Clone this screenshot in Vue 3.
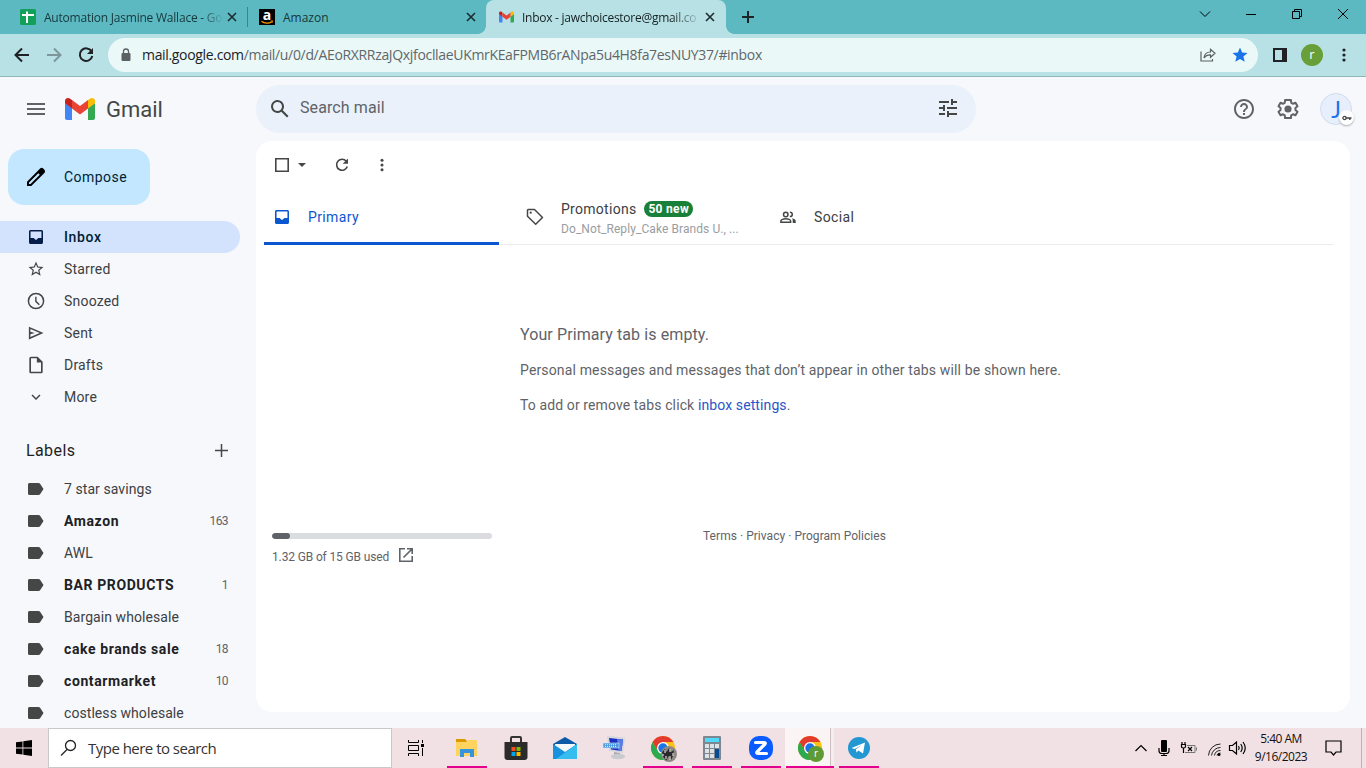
<script setup>
const icons = {
  inbox: 'M19 3H5c-1.100 0-2 .9-2 2v14c0 1.100.9 2 2 2h14c1.100 0 2-.9 2-2V5c0-1.100-.9-2-2-2zM5 5h14v8.200h-3.800c-.6 0-.9.4-1.200 1-.4.700-1.100 1.200-2 1.200s-1.600-.5-2-1.200c-.3-.6-.6-1-1.200-1H5z',
  star: 'M22 9.24l-7.19-.62L12 2 9.19 8.63 2 9.24l5.46 4.73L5.82 21 12 17.27 18.18 21l-1.63-7.03L22 9.24zM12 15.4l-3.76 2.27 1-4.28-3.32-2.88 4.38-.38L12 6.1l1.71 4.04 4.38.38-3.32 2.88 1 4.28L12 15.4z',
  clock: 'M12 2a10 10 0 1 0 0 20 10 10 0 0 0 0-20zm0 18.2a8.2 8.2 0 1 1 0-16.4 8.2 8.2 0 0 1 0 16.4zM12.7 7H11v5.8l4.4 4.4 1.2-1.2-3.9-3.9z',
  sent: 'M2.500 3.500v17L22 12 2.500 3.500zm2 3.100L17 12 4.500 17.400V13.600L10.500 12 4.500 10.400z',
  draft: 'M14 2H6c-1.1 0-2 .9-2 2v16c0 1.1.9 2 2 2h12c1.1 0 2-.9 2-2V8l-6-6zM6 20V4h7v5h5v11H6z',
  more: 'M16.6 8.6L12 13.2 7.4 8.6 6 10l6 6 6-6z',
}
const folders = [
  { name: 'Inbox', icon: 'inbox', active: true },
  { name: 'Starred', icon: 'star' },
  { name: 'Snoozed', icon: 'clock' },
  { name: 'Sent', icon: 'sent' },
  { name: 'Drafts', icon: 'draft' },
  { name: 'More', icon: 'more' },
]
const labels = [
  { name: '7 star savings' },
  { name: 'Amazon', count: 163 },
  { name: 'AWL' },
  { name: 'BAR PRODUCTS', count: 1 },
  { name: 'Bargain wholesale' },
  { name: 'cake brands sale', count: 18 },
  { name: 'contarmarket', count: 10 },
  { name: 'costless wholesale' },
]
const tasks = [
  { id: 'explorer', open: true },
  { id: 'store' },
  { id: 'mail' },
  { id: 'remote' },
  { id: 'chrome', open: true },
  { id: 'calc', open: true },
  { id: 'zoom', open: true },
  { id: 'chrome2', open: true, active: true },
  { id: 'telegram', open: true },
]
const used = 1.2
const total = 15
</script>

<template>
  <div class="screen">
    <header class="tabstrip">
      <div class="tab first">
        <svg width="16" height="16" viewBox="0 0 16 16"><rect width="16" height="16" rx="1.5" fill="#13a05b" /><path d="M2 6h12M7 2.5V14" stroke="#fff" stroke-width="2" /></svg>
        <span class="title sheet">Automation Jasmine Wallace - Go</span>
        <svg class="x" width="10" height="10" viewBox="0 0 10 10"><path d="M1 1l8 8M9 1L1 9" /></svg>
      </div>
      <i class="sep"></i>
      <div class="tab second">
        <svg width="16" height="16" viewBox="0 0 16 16"><rect width="16" height="16" fill="#000" /><text x="8" y="11" text-anchor="middle" class="amazon-a">a</text><path d="M2.5 12.2c3 2.6 7.500 2.600 10.500.5" stroke="#f90" stroke-width="1.200" fill="none" /><path d="M11.500 12l2.200-.2-.7 2" fill="none" stroke="#f90" stroke-width=".8" /></svg>
        <span class="title">Amazon</span>
        <svg class="x" width="10" height="10" viewBox="0 0 10 10"><path d="M1 1l8 8M9 1L1 9" /></svg>
      </div>
      <div class="tab current">
        <svg width="15" height="12" viewBox="0 0 30 22"><path fill="#4285f4" d="M0 5v15a2 2 0 0 0 2 2h5V10z" /><path fill="#34a853" d="M23 10v12h5a2 2 0 0 0 2-2V5z" /><path fill="#fbbc04" d="M23 2v8.500l7-5.200V3c0-2.800-3-4-5.200-2.300z" /><path fill="#c5221f" d="M0 3v2.300l7 5.200V2L5.200.7C3-1 0 .2 0 3z" /><path fill="#ea4335" d="M7 10.500V2l8 6 8-6v8.500l-8 6z" /></svg>
        <span class="title inboxt">Inbox - jawchoicestore@gmail.co</span>
        <svg class="x" width="10" height="10" viewBox="0 0 10 10"><path d="M1 1l8 8M9 1L1 9" /></svg>
      </div>
      <svg class="plus" width="12" height="12" viewBox="0 0 12 12"><path d="M6 0v12M0 6h12" stroke="#1c2426" stroke-width="2" /></svg>
      <div class="winbtns">
        <svg viewBox="0 0 12 12" width="12" height="12"><path d="M1 3.500l5 5 5-5" /></svg>
        <svg viewBox="0 0 12 12" width="12" height="12"><path d="M1 6.500h10" /></svg>
        <svg viewBox="0 0 12 12" width="12" height="12"><path d="M1.500 3.500h7v7h-7zM3.500 3.500v-2h7v7h-2" /></svg>
        <svg viewBox="0 0 12 12" width="12" height="12"><path d="M1 1l10 10M11 1L1 11" /></svg>
      </div>
    </header>

    <div class="toolbar">
      <svg class="nav" viewBox="0 0 16 16" width="16" height="16"><path d="M15 8H2M8 1.500L1.500 8 8 14.500" /></svg>
      <svg class="nav dim" viewBox="0 0 16 16" width="16" height="16"><path d="M1 8h13M8 1.500L14.500 8 8 14.500" /></svg>
      <svg class="nav" viewBox="0 0 16 16" width="16" height="16"><path d="M13.600 4.500A6.300 6.300 0 1 0 14.300 9" /><path d="M15 1v6H9z" class="solid" /></svg>
      <div class="omnibox">
        <svg width="10" height="14" viewBox="0 0 10 14"><rect x=".5" y="5" width="9" height="8" rx="1" fill="#5a6163" /><path d="M2.500 5.500V3.500a2.500 2.500 0 0 1 5 0v2" fill="none" stroke="#5a6163" stroke-width="1.300" /></svg>
        <span class="url"><b>mail.google.com</b>/mail/u/0/d/AEoRXRRzaJQxjfocllaeUKmrKEaFPMB6rANpa5u4H8fa7esNUY37/#inbox</span>
        <svg class="share" width="16" height="16" viewBox="0 0 16 16"><path d="M1 4.500v9.500h11.500V12M4 11c.4-4 3-6 6.500-6V2.300l4.500 4-4.500 4V7.800C7.500 7.700 5.500 8.700 4 11z" /></svg>
        <svg width="16" height="16" viewBox="0 0 16 16"><path d="M8 .5l2.100 5 5.400.5-4.100 3.500 1.300 5.300L8 12l-4.700 2.800 1.300-5.300L.5 6l5.400-.5z" fill="#1a73e8" /></svg>
      </div>
      <svg class="panel" width="14" height="14" viewBox="0 0 14 14"><path d="M1 1h12v12H1z" fill="none" stroke="#202124" stroke-width="2" /><path d="M9 0h5v14H9z" fill="#202124" /></svg>
      <div class="profile">r</div>
      <svg class="dots" width="4" height="14" viewBox="0 0 4 14"><circle cx="2" cy="2" r="1.600" /><circle cx="2" cy="7" r="1.600" /><circle cx="2" cy="12" r="1.600" /></svg>
    </div>

    <div class="gmail">
      <div class="gheader">
        <svg class="burger" width="18" height="12" viewBox="0 0 18 12"><path d="M0 1h18M0 6h18M0 11h18" stroke="#5f6368" stroke-width="2" /></svg>
        <svg class="logo" width="30" height="22" viewBox="0 0 30 22"><path fill="#4285f4" d="M0 5v15a2 2 0 0 0 2 2h5V10z" /><path fill="#34a853" d="M23 10v12h5a2 2 0 0 0 2-2V5z" /><path fill="#fbbc04" d="M23 2v8.500l7-5.200V3c0-2.800-3-4-5.200-2.300z" /><path fill="#c5221f" d="M0 3v2.300l7 5.200V2L5.200.7C3-1 0 .2 0 3z" /><path fill="#ea4335" d="M7 10.500V2l8 6 8-6v8.500l-8 6z" /></svg>
        <span class="brand">Gmail</span>
        <div class="search">
          <svg width="24" height="24" viewBox="0 0 24 24"><path d="M20.500 19l-5.700-5.700A6.500 6.500 0 1 0 13.300 14.800l5.700 5.700zM5 9.500a4.500 4.500 0 1 1 9 0 4.500 4.500 0 0 1-9 0z" fill="#444746" /></svg>
          <span>Search mail</span>
          <svg width="24" height="24" viewBox="0 0 24 24"><path d="M3 17v2h6v-2H3zM3 5v2h10V5H3zm10 16v-2h8v-2h-8v-2h-2v6h2zM7 9v2H3v2h4v2h2V9H7zm14 4v-2H11v2h10zm-6-4h2V7h4V5h-4V3h-2v6z" fill="#444746" /></svg>
        </div>
        <svg class="help" width="24" height="24" viewBox="0 0 24 24"><path fill="#5f6368" d="M11 18h2v-2h-2v2zm1-16C6.480 2 2 6.480 2 12s4.480 10 10 10 10-4.480 10-10S17.520 2 12 2zm0 18c-4.410 0-8-3.590-8-8s3.590-8 8-8 8 3.590 8 8-3.590 8-8 8zm0-14c-2.210 0-4 1.790-4 4h2c0-1.100.9-2 2-2s2 .9 2 2c0 2-3 1.750-3 5h2c0-2.250 3-2.500 3-5 0-2.210-1.790-4-4-4z" /></svg>
        <svg class="gear" width="24" height="24" viewBox="0 0 24 24"><path d="M19.400 13a7.600 7.600 0 0 0 0-2l2.100-1.700-2-3.500-2.500 1a7.500 7.500 0 0 0-1.700-1L14.900 3h-5.800l-.4 2.800a7.500 7.500 0 0 0-1.700 1l-2.500-1-2 3.500L4.600 11a7.600 7.600 0 0 0 0 2l-2.100 1.700 2 3.500 2.500-1a7.500 7.500 0 0 0 1.700 1l.4 2.800h5.800l.4-2.800a7.500 7.500 0 0 0 1.700-1l2.500 1 2-3.500z" fill="none" stroke="#5f6368" stroke-width="2" stroke-linejoin="round" /><circle cx="12" cy="12" r="3.600" fill="#5f6368" /></svg>
        <div class="avatar">J
          <span class="key"><svg width="10" height="6" viewBox="0 0 10 6"><circle cx="2.500" cy="3" r="1.600" fill="none" stroke="#444" stroke-width="1.300" /><path d="M4 3h5.500M7.800 3v2" stroke="#444" stroke-width="1.400" /></svg></span>
        </div>
      </div>

      <div class="gbody">
        <aside>
          <div class="compose">
            <svg width="24" height="24" viewBox="0 0 24 24"><path d="M20.400 4.800l-1.200-1.200a2.200 2.200 0 0 0-3.100 0L3 16.700V21h4.300L20.400 7.900a2.200 2.200 0 0 0 0-3.100zM6.500 19H5v-1.500L14.300 8.200l1.500 1.500z" /></svg>
            <span>Compose</span>
          </div>
          <div v-for="f in folders" :key="f.name" class="row" :class="{ active: f.active }">
            <svg :class="f.icon" :viewBox="f.icon === 'inbox' ? '3 3 18 18' : '0 0 24 24'"><path fill-rule="evenodd" :d="icons[f.icon]" /></svg>
            <span>{{ f.name }}</span>
          </div>
          <div class="lhead"><span>Labels</span><svg width="13" height="13" viewBox="0 0 13 13"><path d="M6.500 0v13M0 6.500h13" stroke="#444746" stroke-width="1.500" /></svg></div>
          <div v-for="l in labels" :key="l.name" class="row label" :class="{ unread: l.count }">
            <svg class="tagi" viewBox="0 0 16 12"><path d="M1.500 0h9c.7 0 1.200.3 1.600.8L15.500 6l-3.400 5.200c-.4.5-.9.8-1.600.8h-9C.7 12 0 11.400 0 10.500v-9C0 .6.700 0 1.500 0z" /></svg>
            <span>{{ l.name }}</span><em>{{ l.count }}</em>
          </div>
        </aside>

        <main>
          <div class="actions">
            <svg width="14" height="14" viewBox="0 0 14 14"><path d="M.8.800h12.400v12.400H.8z" fill="none" stroke="#444746" stroke-width="1.600" /></svg>
            <svg class="caret" width="8" height="4" viewBox="0 0 8 4"><path d="M0 0h8L4 4z" fill="#444746" /></svg>
            <svg class="refresh" width="14" height="14" viewBox="0 0 14 14"><path d="M11.300 3.200A5.500 5.500 0 1 0 12.300 8.600" fill="none" stroke="#444746" stroke-width="1.600" /><path d="M13 .5v5.300H7.700z" fill="#444746" /></svg>
            <svg class="kebab" width="4" height="14" viewBox="0 0 4 14"><circle cx="2" cy="2.300" r="1.500" /><circle cx="2" cy="7" r="1.500" /><circle cx="2" cy="11.700" r="1.500" /></svg>
          </div>
          <div class="cats">
            <div class="cat primary">
              <svg width="14" height="14" viewBox="3 3 18 18"><path fill-rule="evenodd" :d="icons.inbox" /></svg><span>Primary</span>
            </div>
            <div class="cat promo">
              <svg width="18" height="18" viewBox="0 0 18 18"><path d="M1.500 2.300c0-.5.3-.8.8-.8h6.200L16.500 9.500 9.700 16.300 1.500 8.300z" fill="none" stroke="#444746" stroke-width="1.500" stroke-linejoin="round" /><circle cx="4.700" cy="4.700" r="1.100" fill="#444746" /></svg>
              <div><p>Promotions <b>50 new</b></p><small>Do_Not_Reply_Cake Brands U., ...</small></div>
            </div>
            <div class="cat social">
              <svg width="18" height="18" viewBox="0 0 24 24"><g fill="none" stroke="#444746" stroke-width="2"><circle cx="9" cy="8.500" r="3" /><path d="M2.500 19v-1.700c0-1.700 3.500-3 6.500-3s6.500 1.300 6.500 3V19zM14.500 5.600c2 0 3.200 1.200 3.200 2.900s-1.200 2.900-3.200 2.900" /></g><path d="M17.500 13.500c2.500.7 4.800 1.900 4.800 3.800V20h-4v-2.700c0-1.500-.3-2.800-.8-3.800z" fill="#444746" /></svg><span>Social</span>
            </div>
          </div>
          <div class="empty">
            <h2>Your Primary tab is empty.</h2>
            <p class="long">Personal messages and messages that don’t appear in other tabs will be shown here.</p>
            <p class="add">To add or remove tabs click <a>inbox settings</a>.</p>
          </div>
          <footer>
            <div class="storage">
              <div class="bar"><i :style="{ width: (used / total) * 100 + '%' }"></i></div>
              <div class="used"><span>1.32 GB of 15 GB used</span>
                <svg width="14" height="14" viewBox="0 0 14 14"><path d="M6 .8H.8v12.400h12.400V8M8 .8h5.200V6M13 1L4.500 9.500" fill="none" stroke="#5f6368" stroke-width="1.600" /></svg></div>
            </div>
            <div class="terms">Terms · Privacy · Program Policies</div>
          </footer>
        </main>
      </div>
    </div>

    <div class="taskbar">
      <div class="start"><svg width="16" height="16" viewBox="0 0 16 16"><path d="M0 2.300l6.500-.9v6.200H0zM7.300 1.300L16 0v7.600H7.300zM0 8.400h6.500v6.200L0 13.700zM7.300 8.400H16V16l-8.700-1.300z" /></svg></div>
      <div class="tsearch"><svg width="18" height="18" viewBox="0 0 18 18"><circle cx="10.500" cy="6.500" r="5" /><path d="M7 10.500L1 16.500" /></svg><span>Type here to search</span></div>
      <div class="tview"><svg width="18" height="16" viewBox="0 0 18 16"><path d="M1.500 0v2.500h10V0M1.500 16v-2.500h10V16M1.500 5.500h10v5h-10zM15.500 0v3M15.500 8v8" fill="none" stroke="#000" stroke-width="1" /><path d="M14 4h3v3h-3z" /></svg></div>
      <div v-for="t in tasks" :key="t.id" class="task" :class="{ open: t.open, active: t.active }">
        <svg v-if="t.id === 'explorer'" width="24" height="24" viewBox="0 0 24 24"><path d="M1 3h9l2 2v4H1z" fill="#d99a00" /><path d="M1 6h10l2-2h9v16H1z" fill="#ffd45e" /><path d="M5 21v-8h14v8h-4v-4H9v4z" fill="#3794dc" /></svg>
        <svg v-else-if="t.id === 'store'" width="24" height="24" viewBox="0 0 24 24"><path d="M7 7V2q0-1 1-1h8q1 0 1 1v5" fill="none" stroke="#333" stroke-width="2" /><path d="M.5 6h23v15q0 3-3 3h-17q-3 0-3-3z" fill="#2b2b2b" /><path d="M7.500 11h4v4h-4z" fill="#f25022" /><path d="M12.500 11h4v4h-4z" fill="#7fba00" /><path d="M7.500 16h4v4h-4z" fill="#00a4ef" /><path d="M12.500 16h4v4h-4z" fill="#ffb900" /></svg>
        <svg v-else-if="t.id === 'mail'" width="24" height="24" viewBox="0 0 24 24"><path d="M0 8l12-7 12 7v6H0z" fill="#0b5aa8" /><path d="M2 8h20v5l-10 6L2 13z" fill="#f5f8fb" /><path d="M0 8l12 8L24 8v15H0z" fill="#1692df" /><path d="M24 8v15H3z" fill="#36bdf0" /></svg>
        <svg v-else-if="t.id === 'remote'" width="24" height="24" viewBox="0 0 24 24"><path d="M5 0l18 1.500-2 15.500-14-2z" fill="#d4d7dc" /><path d="M7 2l14 1.500L19.500 15 9 13.500z" fill="#182fc0" /><path d="M15 2.900l6 .6L19.500 15h-3z" fill="#5a7de8" /><path d="M12 16l6 1v3h-6z" fill="#a7a9ad" /><ellipse cx="16" cy="20.500" rx="7" ry="2.700" fill="#c8cace" /><path d="M1 7h16v5H1z" fill="#4e9be1" stroke="#d8e7f5" stroke-width=".6" /><path d="M3 8.700h12M3 10.500h12" stroke="#fff" stroke-dasharray="1 1" stroke-width=".8" /></svg>
        <svg v-else-if="t.id === 'calc'" width="18" height="24" viewBox="0 0 18 24"><rect width="18" height="24" rx="1" fill="#7c8790" /><path d="M2 2h14v4H2z" fill="#50d9fa" /><path d="M2 8h4v4H2zM7 8h4v4H7zM12 8h4v4h-4zM2 13h4v4H2zM7 13h4v4H7zM2 18h4v4H2zM7 18h4v4H7z" fill="#dde2e6" /><path d="M12 13h4v9h-4z" fill="#074c91" /></svg>
        <svg v-else-if="t.id === 'zoom'" width="24" height="24" viewBox="0 0 24 24"><rect width="24" height="24" rx="10" fill="#0b5cff" /><path d="M6.500 6.500h8q3 0 1 2l-7 7q-2 2 1 2h8" fill="none" stroke="#fff" stroke-width="3.200" stroke-linecap="round" /></svg>
        <svg v-else-if="t.id === 'telegram'" width="22" height="22" viewBox="0 0 22 22"><circle cx="11" cy="11" r="11" fill="#2297d2" /><path d="M3.500 11L17 5.500 15 16.500l-4.500-3-2 2-.7-3.200L14 8l-7.500 4z" fill="#fff" /></svg>
        <svg v-else class="chrome" width="28" height="28" viewBox="0 0 28 28"><circle cx="12" cy="12" r="12" fill="#fbc116" /><path d="M12 6h10.400a12 12 0 0 0-20.800 0L6.800 15z" fill="#e33b2e" /><path d="M1.600 6A12 12 0 0 0 12 24l5.200-9H6.800z" fill="#2da94f" /><circle cx="12" cy="12" r="6" fill="#fff" /><circle cx="12" cy="12" r="4.700" fill="#1a73e8" />
          <g v-if="t.active"><circle cx="18" cy="18" r="8" fill="#5f9b35" /><text x="18" y="21" text-anchor="middle" class="badge-r">r</text></g>
          <g v-else><circle cx="18" cy="18" r="8" fill="#8d8a86" /><path d="M11 16l3-3 1.500 3 2.500-4 2 4 3-2-1 6-2 4-2.500-4-2 4.500-3-3z" fill="#292a2d" /><path d="M14 14v3M19 13v3M22 17v3M15 20v3M19 20v4M12 18v2" stroke="#cfcac4" stroke-width="1.300" /></g>
        </svg>
      </div>
      <div class="tray">
        <svg class="up" width="12" height="8" viewBox="0 0 12 8"><path d="M.5 7L6 1.500 11.500 7" class="ln" /></svg>
        <svg class="mic" width="12" height="16" viewBox="0 0 12 16"><rect x="3" y="0" width="6" height="12" rx="1" /><path d="M1 8v3q0 2.500 3 2.500h4q3 0 3-2.500V8M6 13.500V16M3 15.500h6" class="ln" /></svg>
        <svg class="bat" width="16" height="12" viewBox="0 0 16 12"><path d="M1 0v2M4 0v2M2.500 6v5" class="ln" /><path d="M.5 2.500h4v2Q4.500 6 2.500 6 .5 6 .5 4.500z" class="ln" /><path d="M6 3.500h8v7H4M15.500 5.500v3" fill="none" stroke="#777" /><path d="M7 5l4 4M11 5L7 9" class="ln" /></svg>
        <svg class="wifi" width="13" height="13" viewBox="0 0 13 13"><path d="M.5 12.500A12 12 0 0 1 12.500 1M3.500 12.500a9 9 0 0 1 9-8M6.500 12.500a6 6 0 0 1 6-5M9 12.500a3.500 3.500 0 0 1 3.500-2.500" fill="none" stroke="#222" /><circle cx="11" cy="11.500" r="1.500" /></svg>
        <svg class="vol" width="17" height="14" viewBox="0 0 17 14"><path d="M.5 4.500h3l4-3.500v12l-4-3.500h-3zM9.500 5q1.500 2 0 4M11.700 3q3 4 0 8M14 1q4.500 6 0 12" class="ln" /></svg>
        <div class="time"><span>5:40 AM</span><span>9/16/2023</span></div>
        <svg class="note" width="17" height="16" viewBox="0 0 17 16"><path d="M1 1h15v11h-5l-2.500 3L6 12H1z" class="ln" /></svg>
      </div>
    </div>
  </div>
</template>

<style>
body { overflow: hidden; }
</style>

<style scoped>
* { box-sizing: border-box; }
.screen { width: 1366px; height: 768px; overflow: hidden; display: flex; flex-direction: column; font-family: Roboto, "Liberation Sans", sans-serif; background: #f6f8fc; }
svg { display: block; flex: none; overflow: visible; }
.tabstrip { height: 34px; flex: none; background: #5cb8c1; display: flex; align-items: center; font: 12px "Open Sans", "Noto Sans", sans-serif; color: #16383c; }
.tab { display: flex; align-items: center; height: 34px; }
.tab .title { flex: 1; margin-left: 8px; white-space: nowrap; }
.x { stroke: #1c2b2d; stroke-width: 1.600; }
.first { width: 247px; padding: 0 10px 0 20px; }
.tab .sheet { letter-spacing: -.22px; margin-right: 4px; mask-image: linear-gradient(90deg, #000 88%, transparent); }
.sep { width: 1px; height: 20px; background: #3b858c; }
.second { width: 238px; padding: 0 10px 0 11px; }
.amazon-a { font: bold 14px "Open Sans", sans-serif; fill: #fff; }
.current { position: relative; width: 240px; padding: 0 11px 0 13px; background: #b8e1e5; border-radius: 8px 8px 0 0; color: #142022; }
.current::before, .current::after { content: ""; position: absolute; bottom: 0; width: 8px; height: 8px; }
.current::before { left: -8px; background: radial-gradient(circle at 0 0, transparent 7.500px, #b8e1e5 8px); }
.current::after { right: -8px; background: radial-gradient(circle at 100% 0, transparent 7.500px, #b8e1e5 8px); }
.tab .inboxt { letter-spacing: -.27px; margin-right: 7px; mask-image: linear-gradient(90deg, #000 85%, transparent 102%); }
.plus { margin-left: 16px; }
.winbtns { margin-left: auto; display: flex; gap: 34px; padding: 0 17px 6px 0; }
.winbtns svg { fill: none; stroke: #000; stroke-width: 1; }
.toolbar { height: 43px; flex: none; background: #b8e1e5; border-bottom: 1px solid #8fb7ba; display: flex; align-items: center; padding: 0 0 1px 14px; }
.nav { fill: none; stroke: #202124; stroke-width: 2; margin-right: 16px; }
.nav.dim { stroke: #7c9699; }
.nav .solid { fill: #202124; stroke: none; }
.omnibox { width: 1150px; height: 34px; margin-left: -2px; border-radius: 17px; background: #ebf8f8; display: flex; align-items: center; padding: 0 10px 0 13px; }
.url { flex: 1; margin-left: 11px; font: 14px "Open Sans", "Noto Sans", sans-serif; letter-spacing: -.33px; color: #5f6769; white-space: nowrap; }
.url b { font-weight: 400; color: #202124; }
.share { fill: none; stroke: #5a6163; stroke-width: 1.200; margin-right: 16px; }
.panel { margin-left: 15px; }
.profile { width: 22px; height: 22px; margin-left: 14px; border-radius: 50%; background: #689f38; color: #fff; font: 13px/21px "Open Sans", sans-serif; text-align: center; }
.dots { margin-left: 19px; fill: #202124; }
.gmail { height: 651px; flex: none; overflow: hidden; background: #f6f8fc; }
.gheader { height: 64px; display: flex; align-items: center; padding-left: 27px; }
.logo { margin-left: 20px; }
.brand { width: 150px; margin-left: 11px; font-size: 22px; color: #444746; }
.search { width: 720px; height: 48px; border-radius: 24px; background: #eaf1fb; display: flex; align-items: center; padding: 0 16px 0 12px; }
.search span { flex: 1; margin: -3px 0 0 8px; font-size: 16px; letter-spacing: .1px; color: #5f6368; }
.search svg:last-child { margin-top: -2px; }
.help { margin-left: 256px; }
.gear { margin-left: 20px; }
.avatar { position: relative; width: 32px; height: 32px; margin-left: 20px; border: 1px solid #d3dcee; border-radius: 50%; background: #e8effc; color: #1a73e8; font: 23px/31px Lato, sans-serif; text-align: center; }
.key { position: absolute; left: 18px; top: 16px; width: 15px; height: 15px; border-radius: 50%; background: #fff; box-shadow: 0 1px 2px #aaa; display: grid; place-items: center; }
.gbody { height: 587px; display: flex; }
aside { width: 256px; padding-top: 8px; overflow: hidden; }
.compose { width: 142px; height: 56px; margin: 0 0 16px 8px; padding-left: 16px; border-radius: 16px; background: #c2e7ff; display: flex; align-items: center; gap: 16px; font-size: 14px; letter-spacing: .45px; color: #001d35; }
.row { width: 240px; height: 32px; padding: 0 12px 0 26px; display: flex; align-items: center; font-size: 14px; letter-spacing: .2px; color: #3c4043; }
.row span { flex: 1; white-space: nowrap; }
.row svg { width: 20px; height: 20px; margin-right: 18px; fill: #444746; }
.row svg.inbox { width: 14px; height: 14px; margin: 0 21px 0 3px; }
.row svg.star { width: 18px; height: 18px; margin: 0 19px 0 1px; }
.row svg.sent, .row svg.more { width: 18px; height: 18px; margin: 0 19px 0 1px; }
.row svg.tagi { width: 16px; height: 12px; margin: 0 20px 0 2px; }
.row.active { border-radius: 0 16px 16px 0; background: #d3e3fd; font-weight: 500; letter-spacing: .65px; color: #001d35; }
.row.active svg { fill: #041e49; }
.lhead { width: 240px; height: 60px; padding: 18px 12px 4px 26px; display: flex; align-items: center; justify-content: space-between; font-size: 16px; color: #1f1f1f; letter-spacing: .4px; }
.row.label { letter-spacing: .07px; }
.label em { font: 12px Roboto, sans-serif; letter-spacing: -.6px; color: #5f6368; }
.row.unread { font-weight: 700; letter-spacing: .6px; color: #202124; }
main { width: 1094px; height: 571px; border-radius: 16px; background: #fff; overflow: hidden; }
.actions { height: 48px; padding-left: 19px; display: flex; align-items: center; }
.caret { margin-left: 9px; }
.refresh { margin-left: 29px; }
.kebab { margin-left: 31px; fill: #444746; }
.cats { height: 56px; width: 1070px; margin-left: 8px; border-bottom: 1px solid #ebecee; display: flex; color: #3c4043; font-size: 14px; letter-spacing: .38px; }
.cat { height: 56px; display: flex; align-items: center; }
.primary { width: 235px; padding-left: 11px; color: #0b57d0; border-bottom: 3px solid #0b57d0; padding-top: 3px; margin-right: 17px; border-radius: 2px 2px 0 0; }
.primary svg { fill: #0b57d0; margin-right: 19px; }
.promo { width: 253px; padding-left: 10px; }
.promo svg { margin-right: 17px; }
.promo p { margin: 2px 0 4px; display: flex; align-items: center; height: 18px; letter-spacing: .28px; }
.promo b { height: 16px; margin-left: 8px; padding: 0 4px; border-radius: 8px; background: #188038; color: #fff; font-size: 12px; line-height: 16px; letter-spacing: .3px; }
.promo small { display: block; font-size: 12px; line-height: 15px; letter-spacing: .08px; color: #9a9da1; }
.social { padding-left: 10px; }
.social svg { margin-right: 17px; }
.empty { height: 284px; padding: 79px 0 0 264px; color: #5f6368; }
.empty h2 { margin: 0 0 14px; font-size: 16px; font-weight: 400; line-height: 22px; letter-spacing: .1px; }
.empty p { margin: 0 0 15px; font-size: 14px; line-height: 20px; letter-spacing: .15px; }
.empty .add { letter-spacing: .11px; }
.empty a { color: #2a55c8; }
footer { display: flex; padding-left: 16px; font-size: 12px; color: #5f6368; }
.storage { width: 220px; padding-top: 4px; }
.bar { height: 6px; border-radius: 3px; background: #dadce0; overflow: hidden; }
.bar i { display: block; height: 6px; border-radius: 3px; background: #5f6368; }
.used { display: flex; align-items: center; height: 18px; margin-top: 9px; gap: 10px; letter-spacing: -.14px; }
.used svg { margin-top: -4px; }
.terms { width: 183px; margin-left: 211px; line-height: 14px; letter-spacing: .04px; white-space: nowrap; }
.taskbar { height: 40px; flex: none; display: flex; background: #f1e1e4; font-family: "Open Sans", "Noto Sans", sans-serif; }
.start { width: 48px; display: grid; place-items: center; }
.tsearch { width: 344px; border: 1px solid #c9c9cb; background: #fff; display: flex; align-items: center; padding-left: 11px; gap: 10px; font-size: 15px; letter-spacing: -.52px; color: #333; }
.tsearch svg { fill: none; stroke: #222; stroke-width: 1.300; }
.tview { width: 50px; padding-right: 2px; display: grid; place-items: center; }
.task { position: relative; width: 49px; display: grid; place-items: center; }
.task.open::after { content: ""; position: absolute; left: 5px; bottom: 0; width: 40px; height: 2px; background: #e3008c; }
.task.active { background: linear-gradient(90deg, #faf4f5 45px, #cdbfc2 45px, #cdbfc2 46px, #f6ecee 46px); }
.task.active::after { left: 1px; width: 48px; }
.chrome { margin: 4px 0 0 4px; }
.badge-r { font: 10px "Open Sans", sans-serif; fill: #fff; }
.tray { margin-left: auto; display: flex; align-items: center; padding-right: 4px; position: relative; }
.tray::after { content: ""; width: 1px; height: 40px; background: #bdb0b3; }
.ln { fill: none; stroke: #000; stroke-width: 1.200; }
.mic { margin-left: 11px; }
.bat { margin-left: 11px; }
.wifi { margin-left: 11px; margin-top: 3px; }
.vol { margin-left: 8px; }
.time { width: 60px; margin-left: 5px; display: flex; flex-direction: column; align-items: center; font-size: 12px; line-height: 18px; letter-spacing: -.5px; white-space: nowrap; color: #111; }
.note { margin: 0 19px 0 14px; }
</style>
